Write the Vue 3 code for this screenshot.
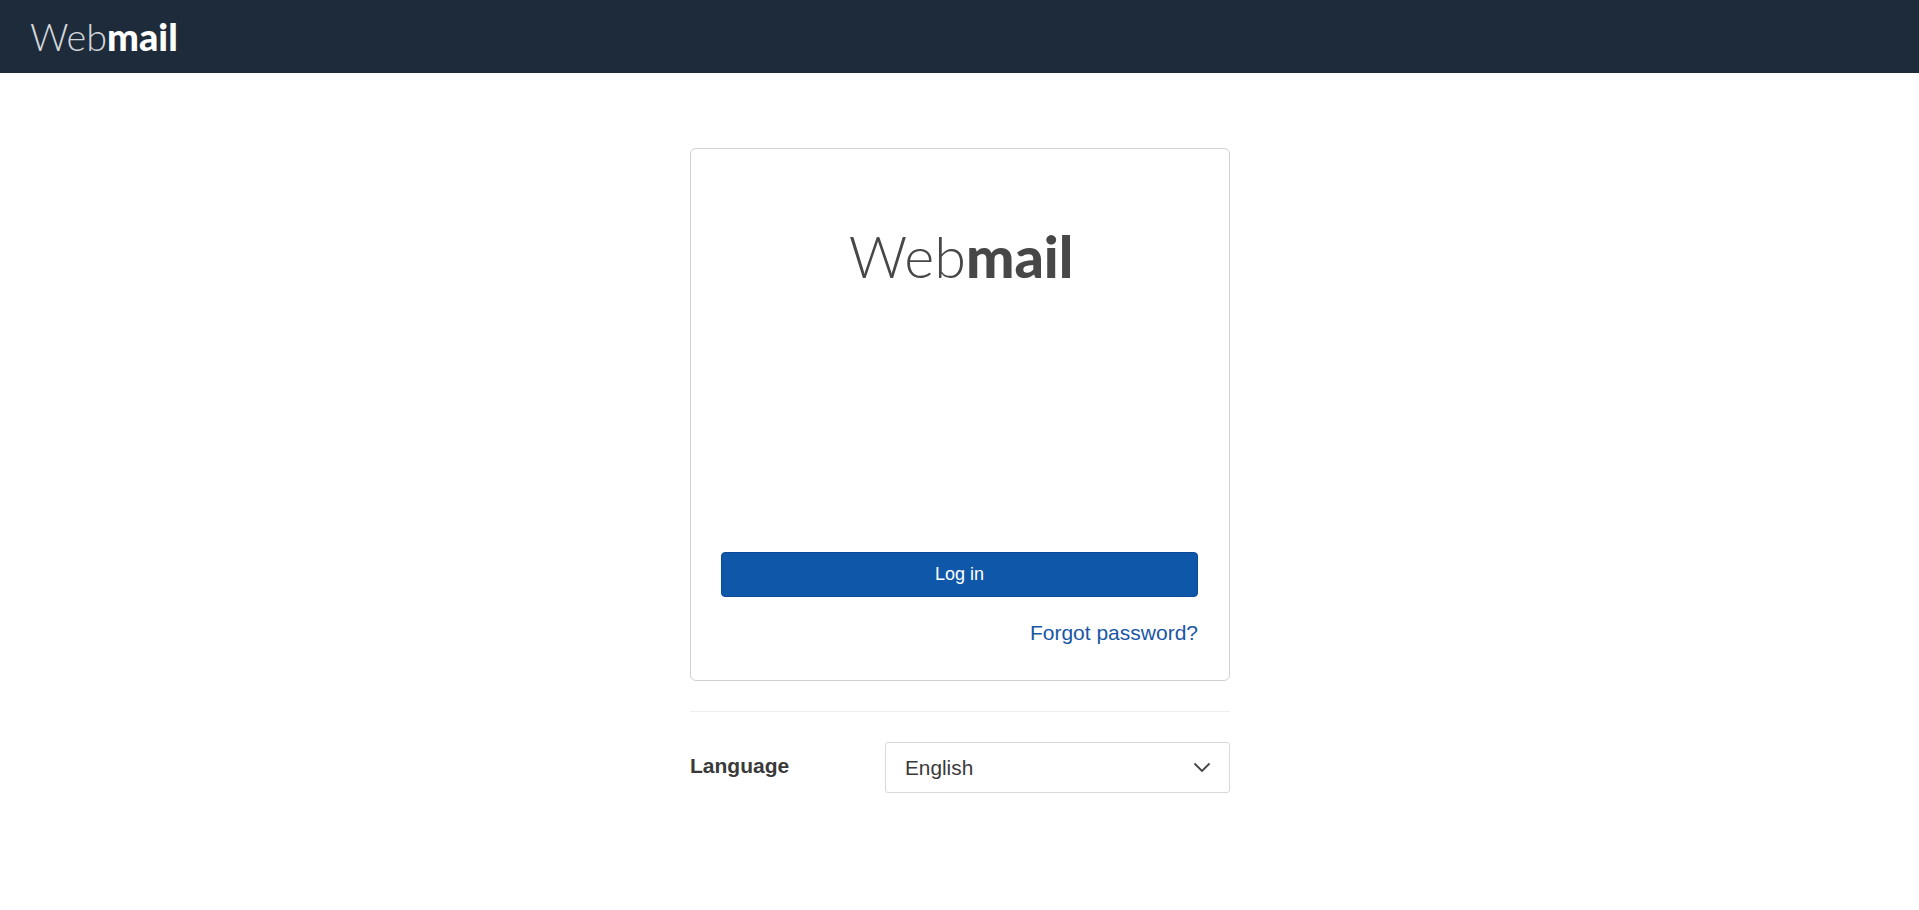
<template>
  <div class="page">
    <header class="top-bar">
      <div class="brand">Web<b>mail</b></div>
    </header>
    <main class="content">
      <section class="login-card">
        <div class="logo">Web<b>mail</b></div>
        <button class="login-btn" type="button">Log in</button>
        <div class="forgot">
          <a href="#">Forgot password?</a>
        </div>
      </section>
      <hr class="divider" />
      <div class="language-row">
        <label class="language-label">Language</label>
        <div class="language-select">
          <span>{{ language }}</span>
          <svg width="18" height="11" viewBox="0 0 18 11" fill="none">
            <path d="M1.5 1.5 9 9l7.5-7.5" stroke="#444" stroke-width="1.8" />
          </svg>
        </div>
      </div>
    </main>
  </div>
</template>

<script setup>
import { ref } from 'vue';
const language = ref('English');
</script>

<style>
body {
  background: #fff;
}
</style>

<style scoped>
.page {
  min-height: 910px;
  padding-left: 1px;
  font-family: "Liberation Sans", Arial, sans-serif;
  color: #3a3a3a;
}
.top-bar {
  height: 73px;
  margin-left: -1px;
  background: #1e2b3a;
  display: flex;
  align-items: center;
  padding-left: 30px;
}
.brand {
  font-family: Lato, sans-serif;
  font-weight: 300;
  font-size: 37.8px;
  line-height: 73px;
  color: #d3d7db;
}
.brand b {
  font-weight: 900;
  color: #fff;
}
.content {
  width: 540px;
  margin: 0 auto;
  padding-top: 75px;
}
.login-card {
  box-sizing: border-box;
  height: 533px;
  padding: 0 31px 0 30px;
  border: 1px solid #d0d0d0;
  border-radius: 6px;
  display: flex;
  flex-direction: column;
}
.logo {
  margin-top: 72px;
  height: 331px;
  padding-left: 3px;
  text-align: center;
  font-family: Lato, sans-serif;
  font-weight: 300;
  font-size: 57.5px;
  line-height: 70px;
  color: #474747;
}
.logo b {
  font-weight: 900;
}
.login-btn {
  height: 45px;
  border: 1px solid #0a4a96;
  border-radius: 4px;
  background: #0f58a9;
  color: #fff;
  font-family: inherit;
  font-size: 18px;
  padding: 0;
}
.forgot {
  margin-top: 24px;
  text-align: right;
  font-size: 21px;
  line-height: 24px;
}
.forgot a {
  color: #1a56a5;
  text-decoration: none;
}
.divider {
  margin: 30px 0 0;
  border: 0;
  border-top: 1px solid #eee;
}
.language-row {
  margin-top: 30px;
  display: flex;
  align-items: center;
}
.language-label {
  width: 195px;
  padding-bottom: 4px;
  font-size: 21px;
  font-weight: 700;
}
.language-select {
  box-sizing: border-box;
  width: 345px;
  height: 51px;
  padding: 0 18px 0 19px;
  border: 1px solid #d9d9d9;
  border-radius: 3px;
  display: flex;
  align-items: center;
  justify-content: space-between;
  font-size: 20.8px;
}
</style>
